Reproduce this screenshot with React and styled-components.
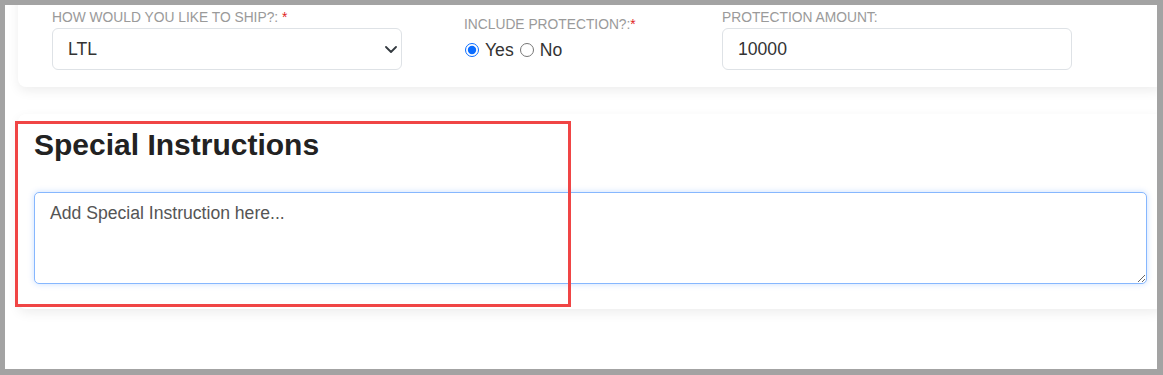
import styled, { createGlobalStyle } from 'styled-components';

const GlobalStyle = createGlobalStyle`
  body {
    margin: 0;
    font-family: "Liberation Sans", Arial, sans-serif;
    background: #fff;
  }
`;

function Chevron() {
  return (
    <ChevronIcon viewBox="0 0 12 7" aria-hidden="true">
      <path d="M1 1l5 5 5-5" fill="none" stroke="#343a40" strokeWidth="1.8" strokeLinecap="round" strokeLinejoin="round" />
    </ChevronIcon>
  );
}

export default function App() {
  return (
    <>
      <GlobalStyle />
      <Frame>
        <Page>
          <ShippingCard>
            <Field $width={350}>
              <Label>
                How would you like to ship?: <Required>*</Required>
              </Label>
              <SelectWrap>
                <Select defaultValue="LTL">
                  <option>LTL</option>
                  <option>FTL</option>
                  <option>Parcel</option>
                </Select>
                <Chevron />
              </SelectWrap>
            </Field>
            <Field $width={196} $offset={7}>
              <Label>
                Include protection?:<Required>*</Required>
              </Label>
              <RadioRow>
                <RadioOption>
                  <Radio type="radio" name="protection" defaultChecked />
                  Yes
                </RadioOption>
                <RadioOption>
                  <Radio type="radio" name="protection" />
                  No
                </RadioOption>
              </RadioRow>
            </Field>
            <Field $width={350}>
              <Label>Protection amount:</Label>
              <TextInput defaultValue="10000" />
            </Field>
          </ShippingCard>

          <InstructionsCard>
            <Heading>Special Instructions</Heading>
            <TextArea placeholder="Add Special Instruction here..." />
          </InstructionsCard>
        </Page>
        <Highlight />
      </Frame>
    </>
  );
}

const Frame = styled.div`
  position: relative;
  width: 1163px;
  height: 375px;
  box-sizing: border-box;
  border-style: solid;
  border-color: #a3a3a3;
  border-width: 5px 6px 6px 5px;
  background: #fff;
  overflow: hidden;
`;

const Page = styled.div`
  display: flex;
  flex-direction: column;
  gap: 27px;
  padding-left: 13px;
  margin-right: -6px;
`;

const Card = styled.section`
  background: #fff;
  border-radius: 8px;
  box-shadow: 0 4px 12px rgba(0, 0, 0, 0.07);
`;

const ShippingCard = styled(Card)`
  display: flex;
  align-items: flex-start;
  gap: 62px;
  margin-top: -20px;
  padding: 25px 34px 17px;
`;

const Field = styled.div`
  display: flex;
  flex-direction: column;
  width: ${(p) => p.$width}px;
  padding-top: ${(p) => p.$offset || 0}px;
`;

const Label = styled.label`
  font-size: 13.8px;
  line-height: 16px;
  color: #9a9a9a;
  text-transform: uppercase;
  margin-bottom: 2px;
`;

const Required = styled.span`
  color: #e02424;
`;

const SelectWrap = styled.div`
  position: relative;
`;

const Select = styled.select`
  appearance: none;
  width: 100%;
  height: 42px;
  box-sizing: border-box;
  padding: 0 40px 0 15px;
  border: 1px solid #dee2e6;
  border-radius: 6px;
  background: #fff;
  font-family: inherit;
  font-size: 17.6px;
  color: #333;
`;

const ChevronIcon = styled.svg`
  position: absolute;
  right: 5px;
  top: 18px;
  width: 12px;
  height: 7px;
  pointer-events: none;
`;

const TextInput = styled.input`
  width: 100%;
  height: 42px;
  box-sizing: border-box;
  padding: 0 15px;
  border: 1px solid #dee2e6;
  border-radius: 6px;
  font-family: inherit;
  font-size: 17.6px;
  color: #333;
`;

const RadioRow = styled.div`
  display: flex;
  align-items: center;
  gap: 5px;
  margin-top: 3px;
  line-height: 24px;
`;

const RadioOption = styled.label`
  display: flex;
  align-items: center;
  gap: 6px;
  font-size: 17.6px;
  color: #333;
`;

const Radio = styled.input`
  width: 14px;
  height: 14px;
  margin: 0 0 0 1px;
  accent-color: #0a6cff;
`;

const InstructionsCard = styled(Card)`
  display: flex;
  flex-direction: column;
  padding: 13px 16px 25px;
`;

const Heading = styled.h2`
  margin: 0 0 29px;
  font-size: 30px;
  line-height: 36px;
  font-weight: 700;
  color: #222;
`;

const TextArea = styled.textarea`
  height: 92px;
  box-sizing: border-box;
  padding: 10px 15px;
  border: 1px solid #86b7fe;
  border-radius: 5px;
  box-shadow: 0 0 6px rgba(13, 110, 253, 0.22);
  font-family: inherit;
  font-size: 17.6px;
  color: #333;
  outline: none;

  &::placeholder {
    color: #555;
  }
`;

const Highlight = styled.div`
  position: absolute;
  left: 10px;
  top: 116px;
  width: 556px;
  height: 186px;
  box-sizing: border-box;
  border: 3px solid #f04545;
  pointer-events: none;
`;
